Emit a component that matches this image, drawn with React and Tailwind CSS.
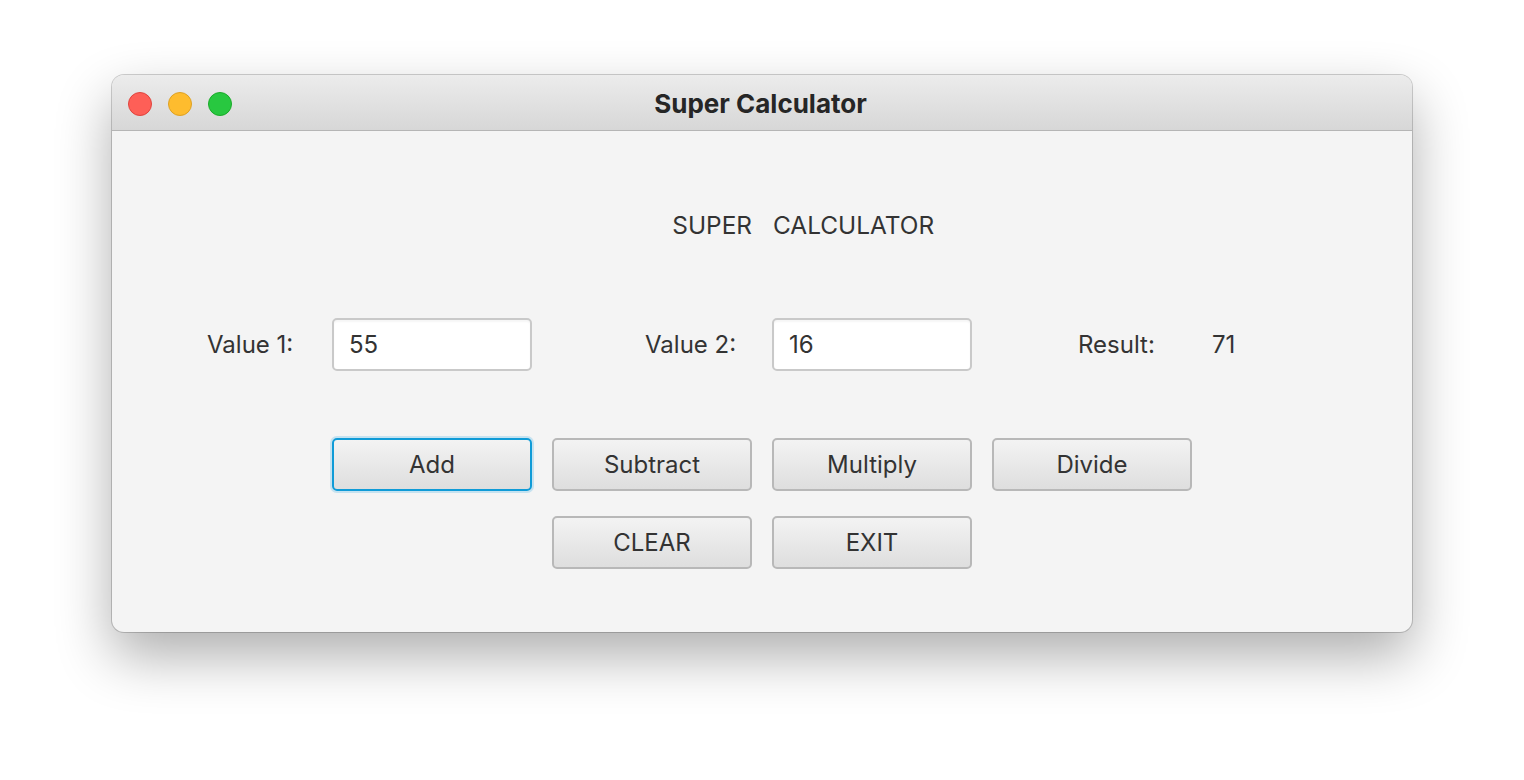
import React from "react";

const font = { fontFamily: "Inter, 'Noto Sans', sans-serif" };

function Btn({ children, focused }) {
  return (
    <div
      className={
        "w-[200px] h-[53px] shrink-0 flex items-center justify-center rounded-[5px] text-[24px] text-[#333] bg-gradient-to-b from-[#f3f3f3] to-[#dedede] " +
        (focused
          ? "border-2 border-[#0f9bd7] shadow-[0_0_0_2px_rgba(140,205,235,0.45)]"
          : "border-2 border-[#b8b8b8]")
      }
    >
      <span className="pt-[1px]">{children}</span>
    </div>
  );
}

function Field({ value }) {
  return (
    <div className="w-[200px] h-[53px] flex items-center px-[15px] rounded-[5px] bg-white border-2 border-[#c9c9c9] text-[24px] text-[#333] shadow-[inset_0_2px_2px_rgba(0,0,0,0.04)]">
      {value}
    </div>
  );
}

export default function App() {
  return (
    <div className="w-full h-[780px] bg-white overflow-hidden" style={font}>
      <div className="ml-[112px] mt-[75px] w-[1300px] h-[557px] rounded-[12px] overflow-hidden bg-[#f4f4f4] shadow-[0_24px_55px_rgba(0,0,0,0.32),0_0_0_1px_rgba(0,0,0,0.18)] flex flex-col">
        {/* Title bar */}
        <div className="relative h-[56px] shrink-0 bg-gradient-to-b from-[#ececec] to-[#d7d7d7] border-b border-[#b5b5b5] flex items-center justify-center">
          <div className="absolute left-[16px] top-[17px] flex gap-[16px]">
            <div className="w-[24px] h-[24px] rounded-full bg-[#fe5f57] border border-[#e0443e]" />
            <div className="w-[24px] h-[24px] rounded-full bg-[#febc2e] border border-[#dea123]" />
            <div className="w-[24px] h-[24px] rounded-full bg-[#28c840] border border-[#1aab29]" />
          </div>
          <div className="text-[26px] font-bold text-[#262626] leading-none pt-[3px] pr-[3px]">Super Calculator</div>
        </div>

        {/* Content */}
        <div className="flex flex-col">
          <div className="flex mt-[80px] h-[29px] items-center text-[24.4px] text-[#333] leading-[29px]">
            <div className="w-[440px] shrink-0" />
            <div className="w-[220px] shrink-0 pr-[20px] text-right">SUPER</div>
            <div className="w-[220px] shrink-0 pl-[1px]">CALCULATOR</div>
          </div>

          <div className="flex mt-[78px] h-[53px] items-center text-[24px] text-[#333]">
            <div className="w-[220px] shrink-0 pl-[95px]">Value 1:</div>
            <div className="w-[220px] shrink-0"><Field value="55" /></div>
            <div className="w-[220px] shrink-0 pl-[93px]">Value 2:</div>
            <div className="w-[220px] shrink-0"><Field value="16" /></div>
            <div className="w-[220px] shrink-0 pl-[86px]">Result:</div>
            <div className="w-[200px] shrink-0">71</div>
          </div>

          <div className="flex mt-[67px] pl-[220px] gap-[20px]">
            <Btn focused>Add</Btn>
            <Btn>Subtract</Btn>
            <Btn>Multiply</Btn>
            <Btn>Divide</Btn>
          </div>

          <div className="flex mt-[25px] pl-[440px] gap-[20px]">
            <Btn>CLEAR</Btn>
            <Btn>EXIT</Btn>
          </div>
        </div>
      </div>
    </div>
  );
}
